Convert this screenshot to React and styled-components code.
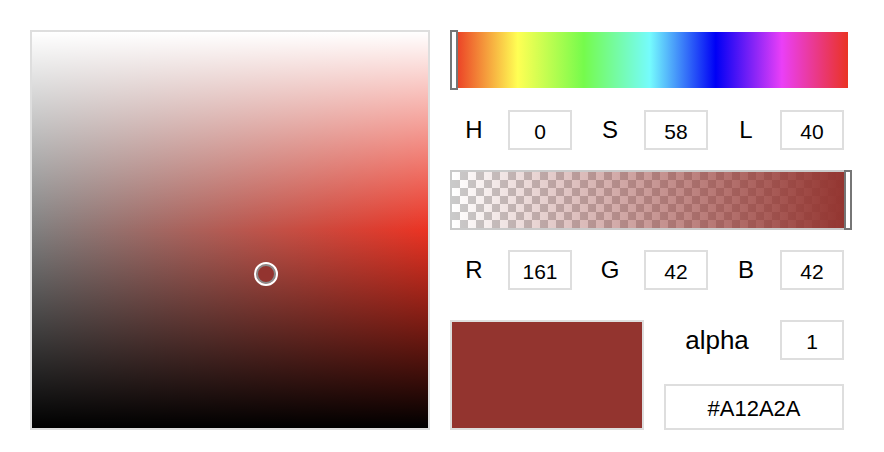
import React, { useState } from "react";
import styled, { createGlobalStyle } from "styled-components";

const GlobalStyle = createGlobalStyle`
  body {
    margin: 0;
    background: #fff;
    font-family: "Liberation Sans", Arial, Helvetica, sans-serif;
    color: #000;
  }
`;

// colours as they show up on the reference display
const SHOWN = "rgb(147, 52, 47)";

const App = () => {
  const [hsl] = useState({ h: 0, s: 58, l: 40 });
  const [rgb] = useState({ r: 161, g: 42, b: 42 });
  const [alpha] = useState(1);

  return (
    <Page>
      <GlobalStyle />
      <SatBox>
        <Picker style={{ left: `${hsl.s}%`, top: `${100 - hsl.l}%` }} />
      </SatBox>

      <Side>
        <HueBar>
          <Thumb style={{ left: `${(hsl.h / 360) * 396}px` }} />
        </HueBar>

        <FieldRow>
          <Field>
            <Label>H</Label>
            <ValueBox readOnly value={hsl.h} />
          </Field>
          <Field>
            <Label>S</Label>
            <ValueBox readOnly value={hsl.s} />
          </Field>
          <Field>
            <Label>L</Label>
            <ValueBox readOnly value={hsl.l} />
          </Field>
        </FieldRow>

        <AlphaBar>
          <AlphaFill />
          <Thumb style={{ left: `${alpha * 396 - 2}px` }} />
        </AlphaBar>

        <FieldRow>
          <Field>
            <Label>R</Label>
            <ValueBox readOnly value={rgb.r} />
          </Field>
          <Field>
            <Label>G</Label>
            <ValueBox readOnly value={rgb.g} />
          </Field>
          <Field>
            <Label>B</Label>
            <ValueBox readOnly value={rgb.b} />
          </Field>
        </FieldRow>

        <BottomRow>
          <Swatch />
          <BottomRight>
            <AlphaRow>
              <AlphaLabel>alpha</AlphaLabel>
              <ValueBox readOnly value={alpha} />
            </AlphaRow>
            <HexBox readOnly value="#A12A2A" />
          </BottomRight>
        </BottomRow>
      </Side>
    </Page>
  );
};

const Page = styled.div`
  display: flex;
  gap: 20px;
  padding: 30px;
`;

const SatBox = styled.div`
  position: relative;
  width: 400px;
  height: 400px;
  box-sizing: border-box;
  border: 2px solid #dedede;
  background:
    linear-gradient(
      to bottom,
      #fff 0%,
      rgba(255, 255, 255, 0) 50%,
      rgba(0, 0, 0, 0) 50%,
      #000 100%
    ),
    linear-gradient(to right, #808080, #ea3323);
`;

const Picker = styled.div`
  position: absolute;
  width: 24px;
  height: 24px;
  margin: -8px 0 0 -8px;
  box-sizing: border-box;
  border-radius: 50%;
  border: 2px solid #fff;
  box-shadow: inset 0 0 0 2px #8a8a8a;
  background: ${SHOWN};
`;

const Side = styled.div`
  display: flex;
  flex-direction: column;
  width: 400px;
`;

const Bar = styled.div`
  position: relative;
  height: 60px;
  box-sizing: border-box;
  border: 2px solid ${p => p.$edge || "transparent"};
`;

const HueBar = styled(Bar)`
  background: linear-gradient(
      to right,
      #ea3323 0%,
      #ffff54 16.6%,
      #75fb4c 33.3%,
      #75fbfd 50%,
      #0000f5 66.6%,
      #ea3ff7 83.3%,
      #ea3323 100%
    )
    padding-box;
`;

const AlphaBar = styled(Bar).attrs({ $edge: "#cacaca" })`
  margin-top: 20px;
  background-color: #fff;
  background-image:
    linear-gradient(45deg, #cacaca 25%, transparent 25%, transparent 75%, #cacaca 75%),
    linear-gradient(45deg, #cacaca 25%, transparent 25%, transparent 75%, #cacaca 75%);
  background-size: 16px 16px;
  background-position: 0 0, 8px 8px;
  background-origin: padding-box;
  background-clip: padding-box;
`;

const AlphaFill = styled.div`
  height: 100%;
  background: linear-gradient(to right, rgba(147, 52, 47, 0), ${SHOWN});
`;

const Thumb = styled.div`
  position: absolute;
  top: -2px;
  width: 8px;
  height: 60px;
  box-sizing: border-box;
  margin-left: -2px;
  border: 2px solid #767676;
  background: #fff;
`;

const FieldRow = styled.div`
  display: flex;
  gap: 14px;
  margin-top: 20px;
`;

const Field = styled.div`
  display: flex;
  align-items: center;
`;

const Label = styled.div`
  width: 48px;
  margin-right: 10px;
  text-align: center;
  font-size: 24px;
`;

const ValueBox = styled.input`
  width: 64px;
  height: 40px;
  box-sizing: border-box;
  border: 2px solid #dedede;
  padding: 3px 0 0;
  margin: 0;
  outline: none;
  background: #fff;
  color: #000;
  text-align: center;
  font-family: inherit;
  font-size: 21px;
`;

const BottomRow = styled.div`
  display: flex;
  gap: 20px;
  margin-top: 30px;
`;

const Swatch = styled.div`
  width: 194px;
  height: 110px;
  box-sizing: border-box;
  border: 2px solid #dedede;
  background: ${SHOWN};
`;

const BottomRight = styled.div`
  display: flex;
  flex-direction: column;
  justify-content: space-between;
  width: 180px;
`;

const AlphaRow = styled.div`
  display: flex;
  align-items: center;
`;

const AlphaLabel = styled.div`
  flex: 1;
  margin-right: 10px;
  text-align: center;
  font-size: 26px;
`;

const HexBox = styled(ValueBox)`
  width: 180px;
  height: 46px;
  font-size: 22px;
`;

export default App;
